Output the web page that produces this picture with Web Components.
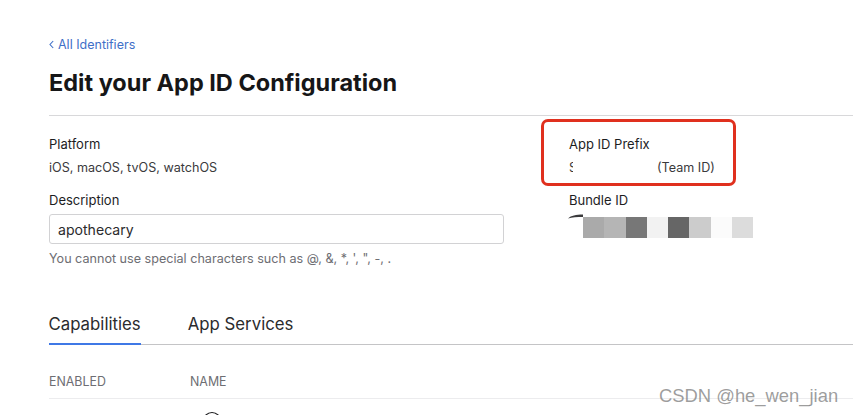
<!DOCTYPE html>
<html>
<head>
<meta charset="utf-8">
<title>Edit your App ID Configuration</title>
<style>
    html, body { margin: 0; height: 100%; background: #fff; overflow: hidden; }
    body { font-family: Inter, "Liberation Sans", sans-serif; color: #1d1d1f; }
</style>
</head>
<body>
<app-page>
    <page-header title-text="Edit your App ID Configuration" back-text="All Identifiers"></page-header>
    <config-section></config-section>
    <cap-tabs></cap-tabs>
    <cap-table></cap-table>
</app-page>
<csdn-mark>CSDN @he_wen_jian</csdn-mark>

<script>
class AppPage extends HTMLElement {
    constructor() {
        super();
        this.attachShadow({ mode: 'open' });
        this.shadowRoot.innerHTML = `
            <style>
                :host {
                    display: block;
                    position: relative;
                    width: 853px;
                    height: 415px;
                    overflow: hidden;
                    box-sizing: border-box;
                    padding: 36px 0 0 49px;
                    -webkit-font-smoothing: antialiased;
                }
            </style>
            <slot></slot>
        `;
    }
}

class PageHeader extends HTMLElement {
    constructor() {
        super();
        this.attachShadow({ mode: 'open' });
    }

    connectedCallback() {
        const back = this.getAttribute('back-text') || '';
        const title = this.getAttribute('title-text') || '';
        this.shadowRoot.innerHTML = `
            <style>
                :host { display: block; }
                .back {
                    display: flex;
                    align-items: center;
                    gap: 4px;
                    height: 17px;
                    font-size: 12.5px;
                    line-height: 17px;
                    color: #3f70c8;
                }
                svg { display: block; }
                h1 {
                    margin: 11px 0 0;
                    font-size: 23.5px;
                    line-height: 38px;
                    font-weight: 700;
                    color: #161617;
                }
                .rule { height: 1px; background: #d8d8da; margin-top: 13px; }
            </style>
            <div class="back">
                <svg width="5" height="9" viewBox="0 0 5 9"><path d="M4.2 1 1 4.5 4.2 8" fill="none" stroke="#3f70c8" stroke-width="1.1"/></svg>
                <span>${back}</span>
            </div>
            <h1>${title}</h1>
            <div class="rule"></div>
        `;
    }
}

class ConfigSection extends HTMLElement {
    constructor() {
        super();
        this.attachShadow({ mode: 'open' });
        this.shadowRoot.innerHTML = `
            <style>
                :host {
                    display: grid;
                    grid-template-columns: 455px 1fr;
                    column-gap: 65px;
                    padding-top: 20px;
                    height: 195px;
                    box-sizing: border-box;
                    font-size: 12.6px;
                    line-height: 17px;
                }
                .label { color: #1d1d1f; font-size: 13px; }
                .value { color: #3a3a3c; margin-top: 6px; }
                .block { margin-bottom: 16px; height: 40px; }
                .input {
                    box-sizing: border-box;
                    height: 30px;
                    width: 455px;
                    margin-top: 5px;
                    padding: 1px 8px 0;
                    border: 1px solid #d2d2d4;
                    border-radius: 3px;
                    font-size: 14.1px;
                    line-height: 28px;
                    color: #2b2b2d;
                }
                .hint { margin-top: 6px; color: #6e6e73; }
                .prefix { position: relative; display: flex; margin-top: 6px; color: #3a3a3c; }
                .prefix .masked { width: 88px; }
                .prefix .smear {
                    position: absolute;
                    left: 4px;
                    top: -2px;
                    width: 80px;
                    height: 22px;
                    background: #fff;
                }
                .bundle { margin-top: 5px; margin-left: -1px; }
            </style>
            <div>
                <div class="block">
                    <div class="label">Platform</div>
                    <div class="value">iOS, macOS, tvOS, watchOS</div>
                </div>
                <div class="label">Description</div>
                <div class="input">apothecary</div>
                <div class="hint">You cannot use special characters such as @, &amp;, *, ', ", -, .</div>
            </div>
            <div>
                <div class="block">
                    <div class="label">App ID Prefix</div>
                    <div class="prefix"><span class="masked">S</span><i class="smear"></i><span>(Team ID)</span></div>
                </div>
                <div class="label">Bundle ID</div>
                <div class="bundle"><mosaic-strip></mosaic-strip></div>
            </div>
        `;
    }
}

class MosaicStrip extends HTMLElement {
    constructor() {
        super();
        this.attachShadow({ mode: 'open' });
        const cells = ['#aaaaaa', '#b5b5b5', '#777777', '#f2f2f2', '#666666', '#cccccc', '#fbfbfb', '#dcdcdc'];
        this.shadowRoot.innerHTML = `
            <style>
                :host { display: flex; align-items: flex-end; height: 24px; }
                svg { display: block; flex: none; }
                i { display: block; width: 21.25px; height: 21px; }
            </style>
            <svg width="15" height="24" viewBox="0 0 15 24"><path d="M0 4.5C3 1.5 8 .5 15 .5V3C9 3 4 3.2 0 4.5Z" fill="#3a3a3c"/></svg>
            ${cells.map(c => `<i style="background:${c}"></i>`).join('')}
        `;
    }
}

class CapTabs extends HTMLElement {
    constructor() {
        super();
        this.attachShadow({ mode: 'open' });
        this.shadowRoot.innerHTML = `
            <style>
                :host {
                    display: flex;
                    gap: 47px;
                    height: 34px;
                    margin-top: -1px;
                    border-bottom: 1px solid #c4c4c6;
                    font-size: 16.8px;
                    line-height: 24px;
                    color: #2b2b2d;
                }
                span { display: block; height: 34px; box-sizing: border-box; padding-top: 2px; }
                .active { border-bottom: 2px solid #3f78e6; height: 35px; margin-left: -.5px; }
            </style>
            <span class="active">Capabilities</span>
            <span>App Services</span>
        `;
    }
}

class CapTable extends HTMLElement {
    constructor() {
        super();
        this.attachShadow({ mode: 'open' });
        this.shadowRoot.innerHTML = `
            <style>
                :host { display: block; position: relative; font-size: 12.4px; color: #6e6e73; }
                .head {
                    display: flex;
                    height: 54px;
                    box-sizing: border-box;
                    padding-top: 29px;
                    line-height: 16px;
                    border-bottom: 1px solid #ececee;
                }
                .enabled { width: 141px; }
                svg { display: block; margin: 12px 0 0 153px; }
            </style>
            <div class="head"><span class="enabled">ENABLED</span><span>NAME</span></div>
            <svg width="20" height="8" viewBox="0 0 20 8"><circle cx="10" cy="10" r="8.5" fill="none" stroke="#1d1d1f" stroke-width="1.2"/></svg>
        `;
    }
}

class CsdnMark extends HTMLElement {
    constructor() {
        super();
        this.attachShadow({ mode: 'open' });
        this.shadowRoot.innerHTML = `
            <style>
                :host {
                    position: absolute;
                    left: 659px;
                    bottom: 8px;
                    font-family: "Liberation Sans", sans-serif;
                    font-size: 18.4px;
                    line-height: 22px;
                    color: rgba(125, 125, 125, 0.75);
                }
            </style>
            <slot></slot>
        `;
    }
}

class RedBox extends HTMLElement {
    constructor() {
        super();
        this.attachShadow({ mode: 'open' });
        this.shadowRoot.innerHTML = `
            <style>
                :host {
                    position: absolute;
                    left: 541px;
                    top: 119px;
                    width: 195px;
                    height: 67px;
                    box-sizing: border-box;
                    border: 3px solid #e0301e;
                    border-radius: 7px;
                }
            </style>
        `;
    }
}

customElements.define('page-header', PageHeader);
customElements.define('mosaic-strip', MosaicStrip);
customElements.define('config-section', ConfigSection);
customElements.define('cap-tabs', CapTabs);
customElements.define('cap-table', CapTable);
customElements.define('csdn-mark', CsdnMark);
customElements.define('red-box', RedBox);
customElements.define('app-page', AppPage);
document.body.appendChild(document.createElement('red-box'));
</script>
</body>
</html>
